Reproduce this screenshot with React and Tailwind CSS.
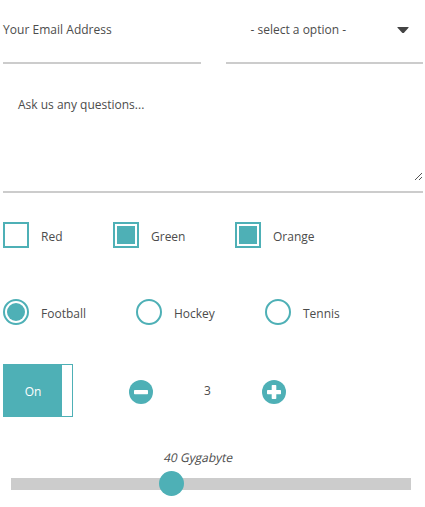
import React, { useState } from 'react';

function Check({ label, checked, onChange, className }) {
  return (
    <label className={`flex items-center gap-3 ${className}`}>
      <input type="checkbox" className="sr-only" checked={checked} onChange={onChange} />
      <span className="h-[26px] w-[26px] shrink-0 border-2 border-[#4eb0b6] p-0.5">
        {checked && <span className="block h-full w-full bg-[#4eb0b6]" />}
      </span>
      <span className="pt-[3px]">{label}</span>
    </label>
  );
}

function Radio({ label, checked, onChange, className }) {
  return (
    <label className={`flex items-center gap-3 ${className}`}>
      <input type="radio" name="sport" className="sr-only" checked={checked} onChange={onChange} />
      <span className="h-[26px] w-[26px] shrink-0 rounded-full border-2 border-[#4eb0b6] p-0.5">
        {checked && <span className="block h-full w-full rounded-full bg-[#4eb0b6]" />}
      </span>
      <span className="pt-[3px]">{label}</span>
    </label>
  );
}

function RoundButton({ plus, onClick }) {
  return (
    <button type="button" onClick={onClick} aria-label={plus ? 'Increase' : 'Decrease'} className="h-6 w-6 shrink-0">
      <svg viewBox="0 0 24 24" className="block h-6 w-6">
        <circle cx="12" cy="12" r="12" fill="#4eb0b6" />
        <rect x="5" y="9.9" width="14" height="4.4" rx="0.7" fill="white" />
        {plus && <rect x="9.7" y="5" width="4.6" height="14" rx="0.7" fill="white" />}
      </svg>
    </button>
  );
}

export default function App() {
  const [colours, setColours] = useState({ Red: false, Green: true, Orange: true });
  const [sport, setSport] = useState('Football');
  const [count, setCount] = useState(3);
  const toggle = (name) => () => setColours({ ...colours, [name]: !colours[name] });

  return (
    <form className="h-[507px] w-[425px] overflow-hidden bg-white pr-0.5 pl-[3px] font-['Open_Sans',sans-serif] text-[12px] leading-[18px] text-[#4c4c4c]">
      <div className="flex h-16 gap-[25px]">
        <div className="w-[198px] border-b-2 border-[#ccc] pt-[21px] tracking-[0.03px]">Your Email Address</div>
        <div className="flex w-[197px] items-start justify-between border-b-2 border-[#ccc] pt-[21px] pr-[14px] pl-[24.5px]">
          <span>- select a option -</span>
          <svg viewBox="0 0 12 6" className="mt-[6px] h-1.5 w-3">
            <path d="M0.5 0h11v0.7L6.8 6H5.4L0.5 0.7z" fill="#444" />
          </svg>
        </div>
      </div>

      <div className="flex h-[129px] items-start justify-between border-b-2 border-[#ccc] pt-8 pl-[15px]">
        <span>Ask us any questions...</span>
        <svg viewBox="0 0 8 8" className="mb-[11px] h-2 w-2 self-end" shapeRendering="crispEdges">
          <path d="M0 7h1v1H0zM1 6h1v1H1zM2 5h1v1H2zM3 4h1v1H3zM4 3h1v1H4zM5 2h1v1H5zM6 1h1v1H6zM4 7h1v1H4zM5 6h1v1H5zM6 5h1v1H6z" fill="#555" />
        </svg>
      </div>

      <div className="mt-[29px] flex h-[26px]">
        <Check label="Red" className="w-[110px]" checked={colours.Red} onChange={toggle('Red')} />
        <Check label="Green" className="w-[122px]" checked={colours.Green} onChange={toggle('Green')} />
        <Check label="Orange" className="" checked={colours.Orange} onChange={toggle('Orange')} />
      </div>

      <div className="mt-[51px] flex h-[26px]">
        <Radio label="Football" className="w-[133px]" checked={sport === 'Football'} onChange={() => setSport('Football')} />
        <Radio label="Hockey" className="w-[129px]" checked={sport === 'Hockey'} onChange={() => setSport('Hockey')} />
        <Radio label="Tennis" className="" checked={sport === 'Tennis'} onChange={() => setSport('Tennis')} />
      </div>

      <div className="mt-[39px] flex h-[53px] items-start">
        <div className="h-full w-[70px] border border-[#4eb0b6]">
          <div className="flex h-full w-[58px] items-center justify-center bg-[#4eb0b6] pt-[3px] text-white">On</div>
        </div>
        <div className="mt-4 ml-14 flex w-[157px] justify-between">
          <RoundButton onClick={() => setCount(count - 1)} />
          <span className="mt-0.5">{count}</span>
          <RoundButton plus onClick={() => setCount(count + 1)} />
        </div>
      </div>

      <div className="mt-8 pl-[161px]">
        <span className="inline-block -skew-x-12">40 Gygabyte</span>
      </div>
      <div className="mt-[11px] ml-2 flex h-3 w-[400px] items-start bg-[#ccc]">
        <div className="-mt-[7px] ml-[148px] h-[25px] w-[25px] shrink-0 rounded-full bg-[#4eb0b6]" />
      </div>
    </form>
  );
}
